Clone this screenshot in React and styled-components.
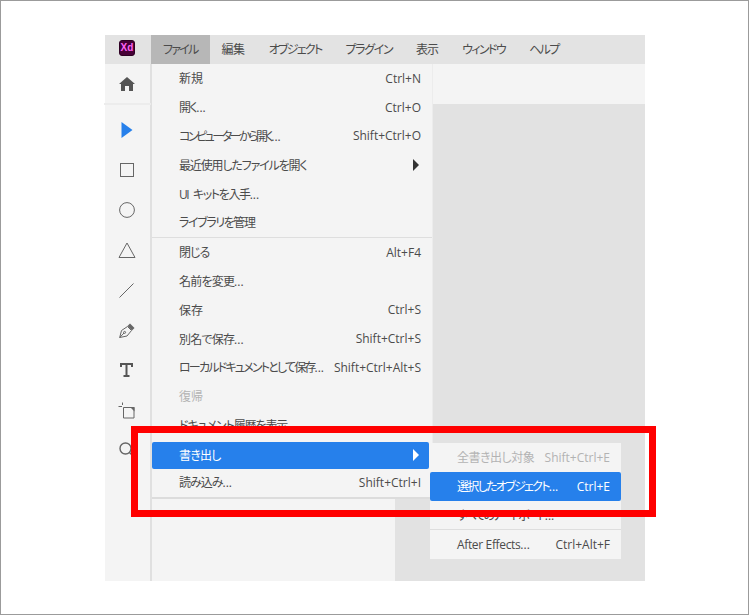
import styled, { createGlobalStyle } from "styled-components";

const GlobalStyle = createGlobalStyle`
  html, body {
    margin: 0;
    padding: 0;
    background: #fff;
  }
  * {
    box-sizing: border-box;
  }
`;

const Page = styled.div`
  position: relative;
  width: 749px;
  height: 615px;
  border: 1px solid #9b9b9b;
  padding: 34px 0 0 104px;
  font-family: "Open Sans", "Noto Sans CJK JP", sans-serif;
  font-feature-settings: "palt";
  font-size: 12px;
  color: #4b4b4b;
`;

const Window = styled.div`
  position: relative;
  width: 540px;
  height: 546px;
  background: #e2e2e2;
  display: flex;
  flex-direction: column;
`;

const MenuBar = styled.div`
  height: 29px;
  background: #e3e3e3;
  display: flex;
  align-items: stretch;
  flex: none;
`;

const LogoCell = styled.div`
  width: 46px;
  padding: 0 2px 3px 0;
  display: flex;
  align-items: center;
  justify-content: center;
  flex: none;
`;

const Logo = styled.div`
  width: 16px;
  height: 16px;
  border-radius: 3px;
  background: #470137;
  border: 1px solid #2e0024;
  color: #ff61f6;
  font-family: "Liberation Sans", sans-serif;
  font-size: 10px;
  font-weight: 700;
  line-height: 13px;
  text-align: center;
`;

const MenuTitle = styled.div`
  display: flex;
  align-items: center;
  padding: 0 12px 2px 12px;
  letter-spacing: ${(p) => p.$track || 0}px;
  background: ${(p) => (p.$active ? "#b7b7b7" : "transparent")};
`;

const Body = styled.div`
  flex: 1;
  display: flex;
  min-height: 0;
`;

const Toolbar = styled.div`
  width: 47px;
  flex: none;
  padding-right: 1px;
  background: #f4f4f4;
  border-right: 2px solid #e0e0e0;
  display: flex;
  flex-direction: column;
  align-items: center;
`;

const HomeCell = styled.div`
  width: 47px;
  height: 41px;
  flex: none;
  display: flex;
  align-items: center;
  justify-content: center;
  padding-right: 1px;
  border-bottom: 2px solid #ececec;
`;

const ToolList = styled.div`
  display: flex;
  flex-direction: column;
  padding: 5px 1px 0 0;
`;

const Tool = styled.div`
  width: 40px;
  height: 40px;
  display: flex;
  align-items: center;
  justify-content: center;
`;

const Side = styled.div`
  width: 243px;
  flex: none;
  background: #f4f4f4;
`;

const Canvas = styled.div`
  flex: 1;
  background: #e2e2e2;
`;

const TopStrip = styled.div`
  position: absolute;
  left: 327px;
  right: 0;
  top: 29px;
  height: 40px;
  background: #f4f4f4;
`;

const Row = styled.div`
  height: ${(p) => p.$h || 28.8}px;
  flex: none;
  display: flex;
  align-items: center;
  justify-content: space-between;
  padding: 0 11px 0 27px;
  border-radius: 2px;
  background: ${(p) => (p.$on ? "#2680eb" : "transparent")};
  color: ${(p) => (p.$on ? "#fff" : p.$off ? "#b3b3b3" : "#4b4b4b")};
  white-space: nowrap;
`;

const FileMenu = styled.div`
  position: absolute;
  left: 47px;
  top: 29px;
  width: 281px;
  height: 435px;
  background: #f4f4f4;
  border-bottom: 2px solid #dcdcdc;
  border-right: 1px solid #ececec;
  display: flex;
  flex-direction: column;

  ${Row}:last-child {
    padding-bottom: 2px;
  }
`;

const SubMenu = styled.div`
  position: absolute;
  left: 325px;
  top: 408px;
  width: 191px;
  height: 116px;
  background: #f4f4f4;
  display: flex;
  flex-direction: column;
`;

const ExportRow = styled(Row)`
  height: 27px;
  margin: 2.6px 3px 0 0;
  padding-right: 8px;
`;

const Label = styled.span`
  letter-spacing: ${(p) => p.$track || 0}px;
  word-spacing: ${(p) => p.$word || 0}px;
`;

const Dots = styled.span`
  letter-spacing: 0;
`;

const Separator = styled.div`
  height: 1px;
  flex: none;
  background: #dedede;
`;

const Arrow = styled.span`
  width: 0;
  height: 0;
  margin-right: 2px;
  border-left: 6px solid ${(p) => (p.$on ? "#fff" : "#333")};
  border-top: 6px solid transparent;
  border-bottom: 6px solid transparent;
`;

const Highlight = styled.div`
  position: absolute;
  left: 130px;
  top: 425px;
  width: 525px;
  height: 91px;
  border: 7px solid #ff0000;
  pointer-events: none;
`;

const stroke = { fill: "none", stroke: "#666", strokeWidth: 1 };

const menuTitles = [
  ["編集", -0.5],
  ["オブジェクト", -1.7],
  ["プラグイン", -1.4],
  ["表示", -1],
  ["ウィンドウ", -1.6],
  ["ヘルプ", -1.7],
];

const topRows = [
  { label: "新規", keys: "Ctrl+N" },
  { label: "開く", dots: true, keys: "Ctrl+O", track: -1.5 },
  { label: "コンピューターから開く", dots: true, keys: "Shift+Ctrl+O", track: -2.5 },
  { label: "最近使用したファイルを開く", arrow: true, track: -1.15 },
  { label: "UI キットを入手", dots: true, track: -1.4, word: 3 },
  { label: "ライブラリを管理", track: -1.4 },
];

const midRows = [
  { label: "閉じる", keys: "Alt+F4", track: -1 },
  { label: "名前を変更", dots: true, track: -0.8 },
  { label: "保存", keys: "Ctrl+S" },
  { label: "別名で保存", dots: true, keys: "Shift+Ctrl+S", track: -0.8 },
  { label: "ローカルドキュメントとして保存", dots: true, keys: "Shift+Ctrl+Alt+S", track: -1.8 },
];

function MenuRow({ label, dots, keys, arrow, track, word, on }) {
  return (
    <Row $on={on}>
      <Label $track={track} $word={word}>
        {label}
        {dots && <Dots>...</Dots>}
      </Label>
      {keys && <span>{keys}</span>}
      {arrow && <Arrow />}
    </Row>
  );
}

function App() {
  return (
    <Page>
      <GlobalStyle />
      <Window>
        <MenuBar>
          <LogoCell>
            <Logo>Xd</Logo>
          </LogoCell>
          <MenuTitle $active $track={-1.75}>ファイル</MenuTitle>
          {menuTitles.map(([t, track]) => (
            <MenuTitle key={t} $track={track}>{t}</MenuTitle>
          ))}
        </MenuBar>
        <Body>
          <Toolbar>
            <HomeCell>
              <svg width="16" height="14" viewBox="0 0 16 14">
                <path d="M8 0 L16 7 L14 7 L14 14 L10 14 L10 9 L6 9 L6 14 L2 14 L2 7 L0 7 Z" fill="#555" />
              </svg>
            </HomeCell>
            <ToolList>
              <Tool>
                <svg width="12" height="16" viewBox="0 0 12 16">
                  <path d="M0.5 0 L11.5 8 L0.5 16 Z" fill="#2680eb" />
                </svg>
              </Tool>
              <Tool>
                <svg width="14" height="14" viewBox="0 0 14 14">
                  <rect x="0.5" y="0.5" width="13" height="13" {...stroke} />
                </svg>
              </Tool>
              <Tool>
                <svg width="16" height="16" viewBox="0 0 16 16">
                  <circle cx="8" cy="8" r="7.4" {...stroke} />
                </svg>
              </Tool>
              <Tool>
                <svg width="18" height="16" viewBox="0 0 18 16">
                  <path d="M9 1 L17 15.5 L1 15.5 Z" {...stroke} />
                </svg>
              </Tool>
              <Tool>
                <svg width="15" height="15" viewBox="0 0 15 15">
                  <path d="M0.5 14.5 L14.5 0.5" {...stroke} />
                </svg>
              </Tool>
              <Tool>
                <svg width="16" height="15" viewBox="0 0 16 15">
                  <path d="M0.7 14.5 L2.5 7.5 L8.5 3.5 L12.5 7.5 L8 13 Z M0.7 14.5 L5 10" {...stroke} />
                  <circle cx="5.6" cy="9.4" r="1" {...stroke} />
                  <path d="M11 0.5 L15.5 5 L13 7.5 L8.5 3 Z" fill="#666" />
                </svg>
              </Tool>
              <Tool>
                <svg width="13" height="14" viewBox="0 0 13 14">
                  <path d="M1 4 L1 1 L12 1 L12 4 M6.5 1 L6.5 13 M3.5 13 L9.5 13" fill="none" stroke="#555" strokeWidth="2" />
                </svg>
              </Tool>
              <Tool>
                <svg width="17" height="17" viewBox="0 0 17 17">
                  <path d="M5.5 5.5 L16 5.5 L16 16 L5.5 16 Z" {...stroke} />
                  <path d="M12 5 L16.5 5 L16.5 9.5 Z" fill="#666" />
                  <path d="M0.5 4.5 L4 4.5 M4.5 0.5 L4.5 3" {...stroke} />
                </svg>
              </Tool>
              <Tool>
                <svg width="16" height="16" viewBox="0 0 16 16">
                  <circle cx="6.5" cy="6.5" r="5.5" fill="none" stroke="#666" strokeWidth="1.4" />
                  <path d="M10.5 10.5 L15 15" fill="none" stroke="#666" strokeWidth="1.4" />
                </svg>
              </Tool>
            </ToolList>
          </Toolbar>
          <Side />
          <Canvas />
        </Body>
        <TopStrip />
        <FileMenu>
          {topRows.map((row) => (
            <MenuRow key={row.label} {...row} />
          ))}
          <Separator />
          {midRows.map((row) => (
            <MenuRow key={row.label} {...row} />
          ))}
          <Row $off>
            <span>復帰</span>
          </Row>
          <MenuRow label="ドキュメント履歴を表示" track={-1.1} />
          <ExportRow $on>
            <Label $track={-0.75}>書き出し</Label>
            <Arrow $on />
          </ExportRow>
          <MenuRow label="読み込み" dots keys="Shift+Ctrl+I" track={-1} />
        </FileMenu>
        <SubMenu>
          <Row $off>
            <Label $track={-0.5}>全書き出し対象</Label>
            <span>Shift+Ctrl+E</span>
          </Row>
          <MenuRow on label="選択したオブジェクト" dots keys="Ctrl+E" track={-1.7} />
          <MenuRow label="すべてのアートボード" dots track={-2.1} />
          <Separator />
          <MenuRow label="After Effects" dots keys="Ctrl+Alt+F" track={-0.35} />
        </SubMenu>
      </Window>
      <Highlight />
    </Page>
  );
}

export default App;
